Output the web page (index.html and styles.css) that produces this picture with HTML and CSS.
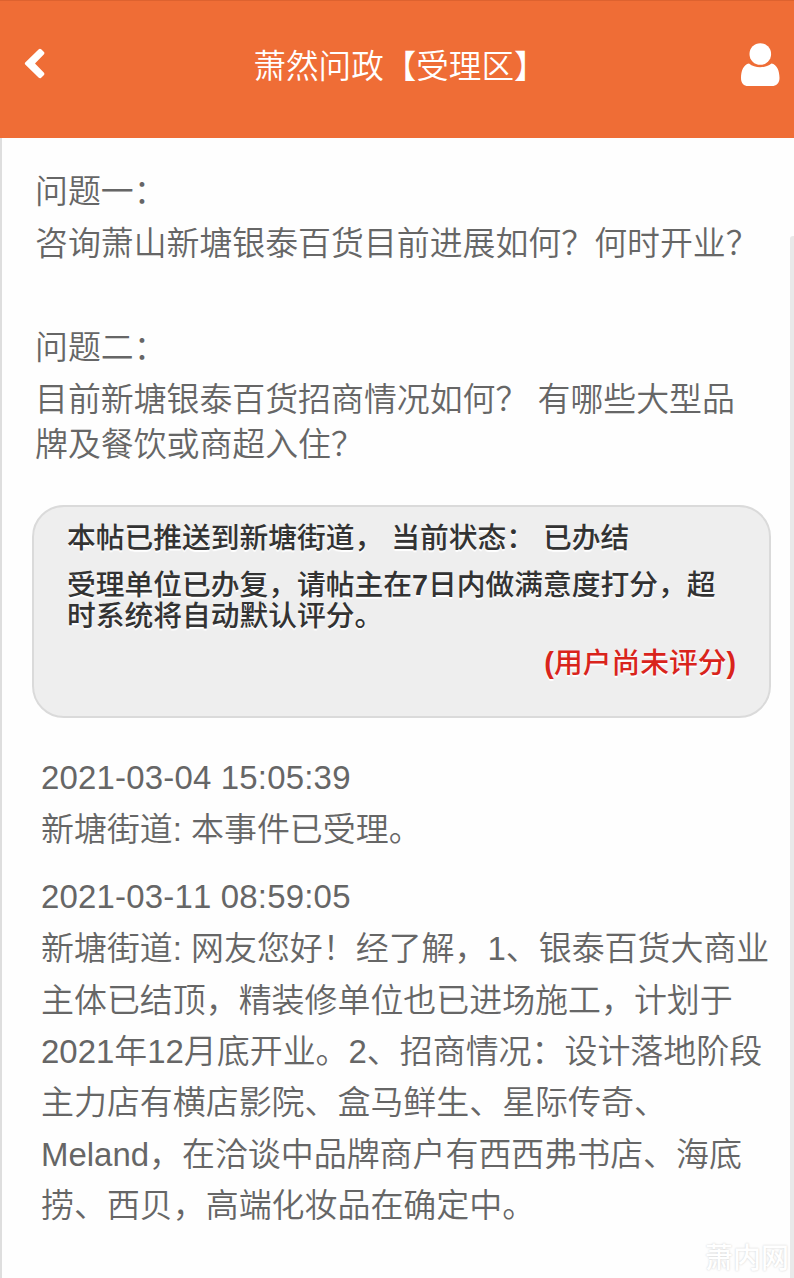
FILE: index.html
```html
<!DOCTYPE html>
<html lang="zh-CN">
<head>
  <meta charset="UTF-8">
  <meta name="viewport" content="width=device-width, initial-scale=1.0">
  <title>萧然问政【受理区】</title>
  <link rel="stylesheet" href="styles.css">
</head>
<body>
  <header class="header">
    <svg class="icon-back" viewBox="0 0 21 32" width="21" height="32">
      <path d="M1.2 14.500 L14.800 1.200 Q16 0.200 17.200 1.300 L20 4 Q21 5 20 6.200 L11 15.500 L20 24.800 Q21 26 20 27 L17.200 29.700 Q16 30.800 14.800 29.800 L1.200 16.500 Q0.300 15.500 1.200 14.500 Z" fill="#fff"/>
    </svg>
    <h1>萧然问政【受理区】</h1>
    <svg class="icon-user" viewBox="0 0 40 44" width="40" height="44">
      <path d="M9 20.500 C3.500 21.500 1 28 1 35 C1 40.500 4 43 8 43 H32 C36 43 39.500 40.500 39.500 35 C39.500 28 37 21.500 31.500 20.500 C25 25.500 15 25.500 9 20.500 Z" fill="#fff"/>
      <circle cx="20.300" cy="11" r="10.800" fill="#fff"/>
    </svg>
  </header>

  <main class="content">
    <div class="question">
      <p>问题一：</p>
      <p>咨询萧山新塘银泰百货目前进展如何？何时开业？</p>
    </div>
    <div class="question">
      <p>问题二：</p>
      <p class="tight">目前新塘银泰百货招商情况如何？ 有哪些大型品<br>牌及餐饮或商超入住？</p>
    </div>

    <div class="status">
      <p>本帖已推送到新塘街道， 当前状态： 已办结</p>
      <p>受理单位已办复，请帖主在<b>7</b>日内做满意度打分，超<br>时系统将自动默认评分。</p>
      <p class="score"><b>(</b>用户尚未评分<b>)</b></p>
    </div>

    <div class="reply">
      <p class="date">2021-03-04 15:05:39</p>
      <p>新塘街道: 本事件已受理。</p>
    </div>
    <div class="reply">
      <p class="date">2021-03-11 08:59:05</p>
      <p>新塘街道: 网友您好！经了解，1、银泰百货大商业<br>主体已结顶，精装修单位也已进场施工，计划于<br>2021年12月底开业。2、招商情况：设计落地阶段<br>主力店有横店影院、盒马鲜生、星际传奇、<br>Meland，在洽谈中品牌商户有西西弗书店、海底<br>捞、西贝，高端化妆品在确定中。</p>
    </div>
  </main>

  <div class="scrollbar"></div>
  <div class="watermark">萧内网</div>
</body>
</html>
```
FILE: styles.css
```css
* {
  box-sizing: border-box;
}
body {
  margin: 0;
  position: relative;
  height: 1278px;
  overflow: hidden;
  background: #fefefe;
  color: #666;
  font-family: "Liberation Sans", "Noto Sans CJK SC", sans-serif;
  font-size: 32.9px;
  font-weight: 350;
  font-kerning: none;
}
h1, p {
  margin: 0;
  white-space: nowrap;
}
.header {
  height: 138px;
  padding: 0 14px 10px 24px;
  display: flex;
  align-items: center;
  justify-content: space-between;
  background: #ef6d36;
  border-top: 1px solid #dd622f;
  color: #fff;
}
.icon-back {
  margin-bottom: 1px;
}
h1 {
  padding: 5px 0 0 15px;
  font-size: 32.6px;
  font-weight: 350;
  line-height: 48px;
}
.content {
  height: 1140px;
  padding: 28px 23px 0 30px;
  border-left: 2px solid #dedede;
}
.question {
  padding-left: 3px;
  margin-bottom: 52px;
  line-height: 52px;
}
.tight {
  padding-top: 3px;
  line-height: 45px;
}
.status {
  height: 213px;
  margin-top: -14px;
  padding: 16px 33px 0;
  border: 2px solid #dadada;
  border-radius: 32px;
  background: #eee;
  color: #333;
  font-size: 28.75px;
  font-weight: 500;
  line-height: 31px;
  text-shadow: 0 2px 1px #fff;
}
.status p {
  margin-bottom: 16px;
}
.status .score {
  color: #d9241c;
  text-align: right;
}
.reply {
  padding-left: 9px;
  font-size: 32.95px;
  line-height: 51.4px;
}
.date {
  margin-bottom: 1px;
  letter-spacing: 0.2px;
}
.status + .reply {
  margin-top: 34px;
  margin-bottom: 15px;
}
/* overlays */
.scrollbar {
  position: absolute;
  top: 236px;
  right: 0;
  bottom: 0;
  width: 4px;
  border-radius: 3px 0 0 0;
  background: #e9e9e9;
}
.watermark {
  position: absolute;
  right: 5px;
  bottom: 1px;
  color: #fff;
  font-size: 28px;
  font-weight: 500;
  line-height: 36px;
  text-shadow: 0 0 2px #ccc;
}
```
